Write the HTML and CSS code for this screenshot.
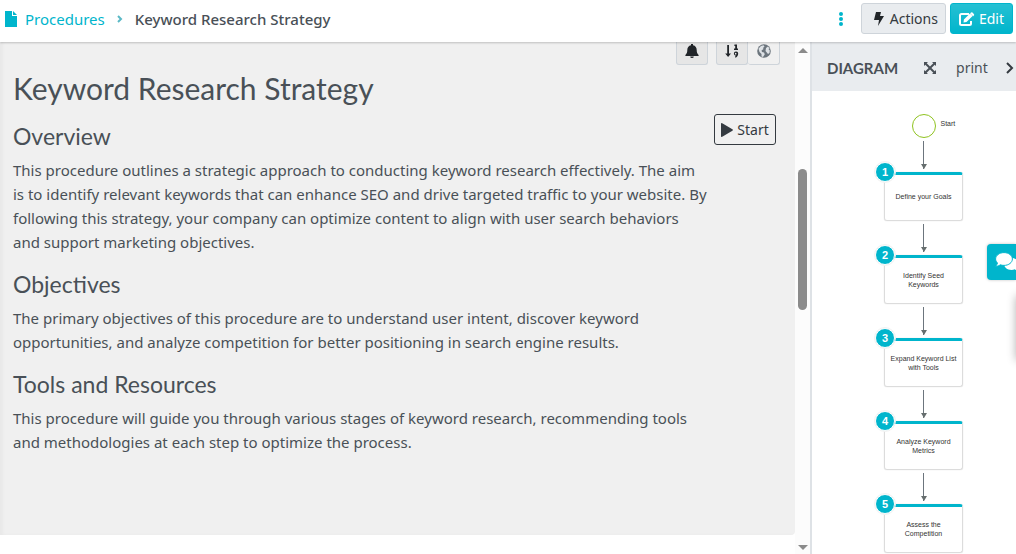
FILE: index.html
```html
<!DOCTYPE html>
<html lang="en">
<head>
  <meta charset="UTF-8">
  <title>Keyword Research Strategy</title>
  <meta name="viewport" content="width=device-width, initial-scale=1">
  <link rel="stylesheet" href="styles.css">
</head>
<body>
  <header class="topbar">
    <nav class="breadcrumb">
      <a href="#"><svg class="file-icon" viewBox="0 0 12 16"><path d="M0 0h7v5h5v11H0z M8 0l4 4H8z"/></svg>Procedures</a>
      <svg class="sep" viewBox="0 0 6 8"><path d="M1 1l3 3-3 3"/></svg>
      <span class="current">Keyword Research Strategy</span>
    </nav>
    <div class="top-actions">
      <button class="dots" aria-label="More">
        <svg viewBox="0 0 6 14"><circle cx="3" cy="2" r="2"/><circle cx="3" cy="7" r="2"/><circle cx="3" cy="12" r="2"/></svg>
      </button>
      <button class="btn btn-light">
        <svg class="bolt" viewBox="0 0 10 14"><path d="M2 0h5L6 4h4L4 14l1-6H0z"/></svg>Actions
      </button>
      <button class="btn btn-primary">
        <svg class="pen" viewBox="0 0 16 14"><path d="M10 2H2.500Q1 2 1 3.500v8Q1 13 2.500 13h8q1.500 0 1.500-1.500V9" fill="none" stroke="#fff" stroke-width="2"/><path d="M4.500 10.500l.4-3L11 1.400l2.600 2.600-6.100 6.100z M11.700.8q.8-1 1.800-.2l1.300 1.300q.8.900 0 1.700l-.6.600-2.900-2.800z"/></svg>Edit
      </button>
    </div>
  </header>

  <div class="layout">
    <main class="content">
      <div class="card">
        <div class="tools">
          <button class="tool on" aria-label="Notifications">
            <svg viewBox="0 0 14 14"><path d="M6 0h2v1.300c2.500.5 3.700 2.300 3.700 4.700 0 2.800.7 3.700 1.900 4.900V12H.4v-1.100C1.600 9.700 2.300 8.800 2.300 6c0-2.400 1.200-4.200 3.700-4.700z M5.200 12.500h3.600a1.800 1.500 0 0 1-3.600 0z"/></svg>
          </button>
          <div class="tool-group">
            <button class="tool on" aria-label="Sort">
              <svg viewBox="0 0 14 14"><path d="M2.200 1h1.800v8.500h2L3.100 13 .2 9.500h2z M9.500.5H12v4h1V6H9V4.500h1.200V2H9.300z"/><path d="M11 7.500a2.100 2.100 0 0 1 2.200 2.100c0 2-1 3.300-2.600 4.100l-.7-.9c.5-.3.900-.7 1-1.100a2.100 2.100 0 0 1 .1-4.200z M11 8.900a.8.800 0 1 0 0 1.500.8.800 0 0 0 0-1.500z" fill-rule="evenodd"/></svg>
            </button>
            <button class="tool globe" aria-label="Language">
              <svg viewBox="0 0 14 14"><circle cx="7" cy="7" r="6.800"/><path class="land" d="M1.500 4.500L4 2l2.500-.8 1 1.300L6 4l.5 1-2 1.500L5 8l2 .6.800 1.600L6 13 4.500 12.500V10L2.500 8z M9 4l2-1.500 1.600 2-1.100.5 1.300 1.500-.3 2.500-1.500 1-1.200-1.500L8.500 7z"/></svg>
            </button>
          </div>
        </div>
        <h1>Keyword Research Strategy</h1>
        <div class="body-row">
          <div class="text">
            <h2>Overview</h2>
            <p>This procedure outlines a strategic approach to conducting keyword research effectively. The aim is to identify relevant keywords that can enhance SEO and drive targeted traffic to your website. By following this strategy, your company can optimize content to align with user search behaviors and support marketing objectives.</p>
            <h2>Objectives</h2>
            <p>The primary objectives of this procedure are to understand user intent, discover keyword opportunities, and analyze competition for better positioning in search engine results.</p>
            <h2>Tools and Resources</h2>
            <p>This procedure will guide you through various stages of keyword research, recommending tools and methodologies at each step to optimize the process.</p>
          </div>
          <button class="start-btn"><svg viewBox="0 0 12 14"><path d="M0 1Q0-.3 1.200.3l10.200 6q1 .7 0 1.400l-10.200 6Q0 14.300 0 13z"/></svg>Start</button>
        </div>
      </div>
    </main>

    <div class="scrollbar">
      <span class="arrow-up"></span>
      <span class="thumb"></span>
      <span class="arrow-down"></span>
    </div>

    <aside class="diagram">
      <div class="diagram-head">
        <h3>DIAGRAM</h3>
        <button aria-label="Full screen">
          <svg class="expand" viewBox="0 0 14 14"><path d="M1 5V1h4L3.700 2.300 7 5.600l3.300-3.300L9 1h4v4l-1.300-1.300L8.400 7l3.300 3.300L13 9v4H9l1.300-1.300L7 8.400l-3.300 3.300L5 13H1V9l1.300 1.300L5.600 7 2.300 3.700z"/></svg>
        </button>
        <a href="#">print</a>
        <button class="close" aria-label="Collapse">
          <svg class="chev" viewBox="0 0 8 12"><path d="M1 1l5 5-5 5"/></svg>
        </button>
      </div>
      <div class="flow">
        <div class="flow-start"><span>Start</span></div>
        <div class="arrow"></div>
        <div class="node"><b>1</b>Define your Goals</div>
        <div class="arrow"></div>
        <div class="node"><b>2</b>Identify Seed Keywords</div>
        <div class="arrow"></div>
        <div class="node"><b>3</b>Expand Keyword List with Tools</div>
        <div class="arrow"></div>
        <div class="node"><b>4</b>Analyze Keyword Metrics</div>
        <div class="arrow"></div>
        <div class="node"><b>5</b>Assess the Competition</div>
      </div>
    </aside>
  </div>

  <button class="chat" aria-label="Chat">
    <svg viewBox="0 0 24 20"><path d="M22 15.500c1.300-1 2-2.300 2-3.800 0-3-3.500-5.700-7.500-5.700S9 8.700 9 12s3.300 5.900 7.500 5.900c1.200 0 2.300-.2 3.300-.6 1 .8 2.300 1.300 4 1.300-.8-.8-1.500-1.900-1.800-3.100z"/><path class="front" d="M9 .6C4.300.6.600 3.500.6 7c0 1.500.7 2.900 1.900 4C2.200 12.200 1.500 13.300.5 14.400c1.900 0 3.500-.7 4.800-1.600 1.100.4 2.400.6 3.700.6 4.700 0 8.400-2.900 8.400-6.400S13.700.6 9 .6z"/></svg>
  </button>
  <div class="side-tab"></div>
</body>
</html>
```

FILE: styles.css
```css
* {
  box-sizing: border-box;
}
body {
  margin: 0;
  height: 100vh;
  overflow: hidden;
  display: flex;
  flex-direction: column;
  font-family: "Noto Sans", sans-serif;
  font-size: 15px;
  line-height: 24px;
  color: #495057;
  background: #fff;
}
button {
  font: inherit;
  color: inherit;
  padding: 0;
  border: 0;
  background: none;
  cursor: pointer;
}
a {
  color: #00b5cc;
  text-decoration: none;
}
svg {
  display: block;
  fill: currentColor;
}

/* top bar */
.topbar {
  position: relative;
  z-index: 1;
  flex: none;
  height: 42px;
  padding: 0 3px 5px 5px;
  display: flex;
  align-items: center;
  justify-content: space-between;
  background: #fff;
  box-shadow: 0 1px 2px rgba(0, 0, 0, 0.2);
}
.breadcrumb {
  display: flex;
  align-items: center;
  gap: 12px;
}
.breadcrumb a {
  display: flex;
  align-items: center;
  gap: 8px;
}
.file-icon {
  width: 12px;
  height: 16px;
}
.sep {
  width: 6px;
  height: 8px;
  fill: none;
  stroke: #5bb9c6;
  stroke-width: 2;
}
.current {
  font-weight: 500;
}
.top-actions {
  display: flex;
  align-items: center;
  gap: 4px;
  font-size: 14px;
}
.dots {
  color: #00b5cc;
  margin-right: 13px;
}
.dots svg {
  width: 6px;
  height: 14px;
}
.btn {
  height: 31px;
  padding: 0 8px;
  display: flex;
  align-items: center;
  gap: 4px;
  border: 1px solid #ced4da;
  border-radius: 3px;
}
.btn-light {
  padding: 0 7px 0 12px;
  gap: 6px;
  background: #e9ecef;
  color: #343a40;
}
.btn-primary {
  border-color: #00b5cc;
  background: linear-gradient(#26c0d3, #00b5cc);
  color: #fff;
}
.bolt {
  width: 10px;
  height: 14px;
  fill: #212529;
}
.pen {
  width: 16px;
  height: 14px;
}

/* procedure text */
.layout {
  flex: 1;
  min-height: 0;
  display: flex;
}
.content {
  flex: 1;
  min-width: 0;
  padding-bottom: 19px;
}
.card {
  height: 100%;
  padding: 0 15px 0 13px;
  background: #f0f0f0;
  border-radius: 0 0 4px 0;
  box-shadow: inset 3px 0 3px rgba(0, 0, 0, 0.03);
}
.tools {
  display: flex;
  justify-content: flex-end;
  gap: 8px;
}
.tool-group {
  display: flex;
}
.tool {
  width: 32px;
  height: 23px;
  padding-bottom: 4px;
  display: flex;
  align-items: center;
  justify-content: center;
  color: #212529;
  border: 1px solid #ced4da;
  border-top: 0;
  border-radius: 0 0 3px 3px;
}
.tool.on {
  background: #e6e6e6;
}
.tool svg {
  width: 14px;
  height: 14px;
}
.tool.globe {
  color: #6c757d;
  border-left: 0;
}
.land {
  fill: #dee2e6;
}
h1,
h2,
h3 {
  margin: 0;
  font-family: Lato, sans-serif;
  font-weight: 400;
}
h1 {
  margin-top: 4px;
  font-size: 30px;
  line-height: 38px;
}
.body-row {
  margin-top: 7px;
  padding-right: 4px;
  display: flex;
  align-items: flex-start;
  justify-content: space-between;
}
.text {
  flex: 0 1 696px;
}
h2 {
  padding-top: 8px;
  font-size: 23px;
  line-height: 28px;
}
p {
  margin: 8px 0;
}
.start-btn {
  flex: none;
  width: 62px;
  height: 31px;
  display: flex;
  align-items: center;
  justify-content: center;
  gap: 4px;
  font-size: 14px;
  color: #343a40;
  border: 1px solid #343a40;
  border-radius: 3px;
}
.start-btn svg {
  width: 12px;
  height: 14px;
}

/* scrollbar */
.scrollbar {
  flex: none;
  width: 15px;
  padding: 6px 3px 4px;
  display: flex;
  flex-direction: column;
  align-items: center;
  background: #fcfcfc;
}
.arrow-up,
.arrow-down {
  border: 5px solid transparent;
  border-top-width: 0;
  border-bottom: 5px solid #8b8b8b;
}
.arrow-down {
  margin-top: auto;
  border-top: 5px solid #8b8b8b;
  border-bottom-width: 0;
}
.thumb {
  margin-top: 116px;
  width: 9px;
  height: 141px;
  border-radius: 5px;
  background: #8b8b8b;
}

/* diagram */
.diagram {
  flex: none;
  width: 206px;
  border-left: 2px solid #dee2e6;
  overflow: hidden;
}
.diagram-head {
  height: 49px;
  padding: 3px 2px 0 15px;
  display: flex;
  align-items: center;
  background: #e9ecef;
  font-size: 14px;
}
.diagram-head h3 {
  margin-right: 25px;
  font-size: 15px;
  font-weight: 700;
}
.diagram-head a {
  margin-left: 19px;
  color: #495057;
}
.expand {
  width: 14px;
  height: 14px;
}
.close {
  margin-left: auto;
}
.chev {
  width: 8px;
  height: 12px;
  fill: none;
  stroke: #343a40;
  stroke-width: 2;
}
.flow {
  padding: 23px 0 0 19px;
  display: flex;
  flex-direction: column;
  align-items: center;
  font-family: "Liberation Sans", sans-serif;
  font-size: 7px;
  line-height: 9px;
  color: #333;
}
.flow-start {
  position: relative;
  width: 24px;
  height: 24px;
  border: 1px solid #8fc31f;
  border-radius: 50%;
}
.flow-start span {
  position: absolute;
  left: 28px;
  top: 4px;
}
.arrow {
  position: relative;
  width: 1px;
  height: 28px;
  margin: 3px 0;
  background: #6c757d;
}
.arrow::after {
  content: "";
  position: absolute;
  left: -2px;
  bottom: 0;
  border: 3px solid transparent;
  border-top: 5px solid #666e6e;
  border-bottom: 0;
}
.node {
  position: relative;
  width: 79px;
  height: 49px;
  padding: 0 3px 2px;
  display: flex;
  align-items: center;
  justify-content: center;
  text-align: center;
  border: 1px solid #dcdcdc;
  border-top: 3px solid #00b5cc;
  border-radius: 3px;
  box-shadow: 0 0 1px rgba(0, 0, 0, 0.2);
}
.node b {
  position: absolute;
  left: -10px;
  top: -13px;
  width: 20px;
  height: 20px;
  border: 1px solid #fff;
  outline: 1px solid #f2f2f2;
  border-radius: 50%;
  background: #00b5cc;
  color: #fff;
  font-size: 11px;
  line-height: 18px;
}

/* floating things on the right edge */
.chat {
  position: fixed;
  right: 0;
  top: 244px;
  width: 29px;
  height: 36px;
  padding-left: 8px;
  overflow: hidden;
  display: flex;
  align-items: center;
  border-radius: 4px 0 0 4px;
  background: #00b5cc;
  color: #fff;
  box-shadow: 0 0 3px rgba(0, 0, 0, 0.25);
}
.chat svg {
  flex: none;
  width: 24px;
  height: 20px;
}
.chat .front {
  stroke: #00b5cc;
  stroke-width: 1;
}
.side-tab {
  position: fixed;
  left: 100%;
  top: 296px;
  width: 20px;
  height: 64px;
  box-shadow: 0 0 10px rgba(0, 0, 0, 0.3);
}
```
